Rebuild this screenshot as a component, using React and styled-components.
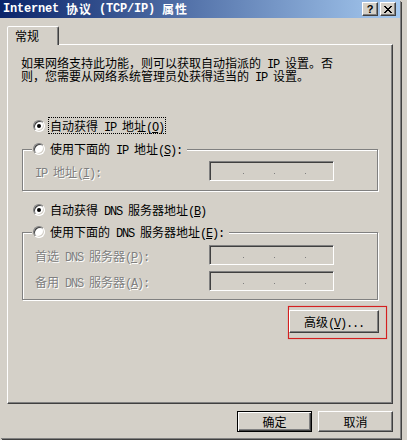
import React from "react";
import styled, { createGlobalStyle } from "styled-components";

const GlobalStyle = createGlobalStyle`
  html, body {
    margin: 0;
    padding: 0;
  }
  body {
    width: 407px;
    height: 440px;
    overflow: hidden;
    background: #d4d0c8;
    font-family: "Noto Sans CJK SC", "Noto Sans", sans-serif;
    font-size: 12px;
    color: #000;
  }
`;

const Window = styled.div`
  width: 400px;
  height: 438px;
  display: flex;
  flex-direction: column;
  background: #d4d0c8;
  box-shadow: 1px 1px 0 #808080, 2px 2px 0 #404040;
`;

const TitleBar = styled.div`
  flex: none;
  height: 18px;
  box-sizing: border-box;
  display: flex;
  align-items: center;
  padding: 0 4px 0 3px;
  background: linear-gradient(to right, #0a246a, #a6caf0);
  color: #fff;
  font-weight: bold;
  line-height: 18px;
  white-space: nowrap;
`;

const CaptionButtons = styled.div`
  margin-left: auto;
  display: flex;
  gap: 2px;
`;

const CaptionButton = styled.button`
  width: 16px;
  height: 14px;
  box-sizing: border-box;
  padding: 0;
  display: flex;
  align-items: center;
  justify-content: center;
  background: #d4d0c8;
  border: 1px solid;
  border-color: #fff #404040 #404040 #fff;
  box-shadow: inset -1px -1px 0 #808080;
  font-family: "Liberation Sans", Arial, sans-serif;
  font-weight: bold;
  font-size: 11px;
  line-height: 11px;
  color: #000;
`;

const Body = styled.div`
  flex: 1;
  display: flex;
  flex-direction: column;
  padding: 8px 0 0 7px;
`;

const Tab = styled.div`
  position: relative;
  z-index: 1;
  align-self: flex-start;
  width: 52px;
  height: 19px;
  box-sizing: border-box;
  margin-bottom: -1px;
  padding: 1px 0 0 7px;
  line-height: 15px;
  background: #d4d0c8;
  border: 1px solid;
  border-bottom: none;
  border-color: #fff #404040 transparent #fff;
  border-radius: 2px 2px 0 0;
  box-shadow: inset -1px 0 0 #808080;
`;

const Panel = styled.div`
  width: 386px;
  height: 360px;
  box-sizing: border-box;
  display: flex;
  flex-direction: column;
  border: 1px solid;
  border-color: #fff #404040 #404040 #fff;
  box-shadow: inset -1px -1px 0 #808080;
`;

const Intro = styled.p`
  margin: 11px 0 0 13px;
  line-height: 13px;
  white-space: nowrap;
`;

const RadioRow = styled.div`
  display: flex;
  align-items: center;
  height: 17px;
  margin: ${(p) => p.$mt}px 0 0 25px;
`;

const Radio = styled.span`
  flex: none;
  width: 12px;
  height: 12px;
  box-sizing: border-box;
  display: flex;
  align-items: center;
  justify-content: center;
  border-radius: 50%;
  border: 1px solid;
  border-color: #808080 #fff #fff #808080;
  box-shadow: inset 1px 1px 0 #404040, inset -1px -1px 0 #d4d0c8;
  background: #fff;

  &::after {
    content: "";
    display: ${(p) => (p.$checked ? "block" : "none")};
    width: 4px;
    height: 4px;
    border-radius: 50%;
    background: #000;
  }
`;

const Label = styled.span`
  margin-left: 3px;
  padding: 0 1px;
  height: 17px;
  box-sizing: border-box;
  line-height: 15px;
  white-space: nowrap;
  border: 1px dotted ${(p) => (p.$focus ? "#000" : "transparent")};
`;

const Group = styled.div`
  width: 356px;
  box-sizing: border-box;
  display: flex;
  flex-direction: column;
  margin: ${(p) => p.$mt}px 0 0 14px;
  padding-bottom: ${(p) => p.$pb}px;
  border: 1px solid #808080;
  box-shadow: 1px 1px 0 #fff, inset 1px 1px 0 #fff;
`;

const GroupHead = styled.div`
  align-self: flex-start;
  display: flex;
  align-items: center;
  height: 17px;
  margin: -10px 0 0 9px;
  padding: 0 3px 0 1px;
  background: #d4d0c8;
`;

const FieldRow = styled.div`
  display: grid;
  grid-template-columns: 174px 125px;
  align-items: center;
  margin-top: ${(p) => p.$mt}px;
  padding-left: 12px;
`;

const DimText = styled.span`
  color: #808080;
  text-shadow: 1px 1px 0 #fff;
  white-space: nowrap;
  line-height: 15px;
`;

const IpBox = styled.div`
  width: 125px;
  height: 20px;
  box-sizing: border-box;
  display: flex;
  align-items: flex-start;
  gap: 30px;
  padding: 11px 0 0 33px;
  background: #d4d0c8;
  border: 1px solid;
  border-color: #808080 #fff #fff #808080;
  box-shadow: inset 1px 1px 0 #404040, inset -1px -1px 0 #d4d0c8;
`;

const IpDot = styled.span`
  width: 1px;
  height: 1px;
  background: #808080;
`;

const Highlight = styled.div`
  align-self: flex-end;
  display: flex;
  margin: 6px 5px 0 0;
  padding: 3px 7px 5px 0;
  border: 1px solid #d41f1f;
  box-shadow: 0 0 1px rgba(220, 30, 30, 0.5), inset 0 0 1px rgba(220, 30, 30, 0.5);
`;

const Button = styled.button`
  width: ${(p) => p.$w}px;
  height: ${(p) => p.$h}px;
  box-sizing: border-box;
  padding: 0;
  background: #d4d0c8;
  font-family: "Noto Sans CJK SC", sans-serif;
  font-size: 12px;
  line-height: 15px;
  color: #000;
  white-space: nowrap;
  border: 1px solid;
  border-color: ${(p) => (p.$default ? "#000" : "#fff #404040 #404040 #fff")};
  box-shadow: ${(p) =>
    p.$default
      ? "inset 1px 1px 0 #fff, inset -1px -1px 0 #404040, inset -2px -2px 0 #808080"
      : "inset -1px -1px 0 #808080"};
`;

const Footer = styled.div`
  align-self: flex-end;
  display: flex;
  gap: 6px;
  margin: 7px 7px 0 0;
`;

// latin runs get a fixed 6px cell (7px bold), like the dialog's bitmap font
const Lat = styled.span`
  font-family: "Liberation Mono", "Courier New", monospace;
  font-size: 12px;
  line-height: 0;
  letter-spacing: ${(p) => (p.$bold ? "-0.2px" : "-1.2px")};
  white-space: pre;
`;

const Han = styled.span`
  letter-spacing: ${(p) => (p.$bold ? "1px" : "0")};
`;

// "&X" marks the access key, like a Win32 resource string
const accel = (s) =>
  s.split(/&(.)/).map((piece, i) => (i % 2 ? <u key={i}>{piece}</u> : piece));

const Mixed = ({ text, bold }) =>
  text
    .split(/([\x20-\x7e]+)/)
    .filter(Boolean)
    .map((part, i) =>
      /^[\x20-\x7e]+$/.test(part) ? (
        <Lat key={i} $bold={bold}>
          {accel(part)}
        </Lat>
      ) : (
        <Han key={i} $bold={bold}>
          {part}
        </Han>
      )
    );

const CloseGlyph = () => (
  <svg width="8" height="7" viewBox="0 0 8 7" shapeRendering="crispEdges">
    <path
      fill="#000"
      d="M0 0h2v1H0zM6 0h2v1H6zM1 1h2v1H1zM5 1h2v1H5zM2 2h4v1H2zM3 3h2v1H3zM2 4h4v1H2zM1 5h2v1H1zM5 5h2v1H5zM0 6h2v1H0zM6 6h2v1H6z"
    />
  </svg>
);

const IpField = () => (
  <IpBox>
    <IpDot />
    <IpDot />
    <IpDot />
  </IpBox>
);

export default function App() {
  return (
    <>
      <GlobalStyle />
      <Window>
        <TitleBar>
          <Mixed text="Internet 协议 (TCP/IP) 属性" bold />
          <CaptionButtons>
            <CaptionButton>?</CaptionButton>
            <CaptionButton>
              <CloseGlyph />
            </CaptionButton>
          </CaptionButtons>
        </TitleBar>

        <Body>
          <Tab>常规</Tab>
          <Panel>
            <Intro>
              <Mixed text="如果网络支持此功能，则可以获取自动指派的 IP 设置。否" />
              <br />
              <Mixed text="则，您需要从网络系统管理员处获得适当的 IP 设置。" />
            </Intro>

            <RadioRow $mt={35}>
              <Radio $checked />
              <Label $focus>
                <Mixed text="自动获得 IP 地址(&O)" />
              </Label>
            </RadioRow>

            <Group $mt={15} $pb={9}>
              <GroupHead>
                <Radio />
                <Label>
                  <Mixed text="使用下面的 IP 地址(&S):" />
                </Label>
              </GroupHead>
              <FieldRow $mt={4}>
                <DimText>
                  <Mixed text="IP 地址(&I):" />
                </DimText>
                <IpField />
              </FieldRow>
            </Group>

            <RadioRow $mt={10}>
              <Radio $checked />
              <Label>
                <Mixed text="自动获得 DNS 服务器地址(&B)" />
              </Label>
            </RadioRow>

            <Group $mt={14} $pb={8}>
              <GroupHead>
                <Radio />
                <Label>
                  <Mixed text="使用下面的 DNS 服务器地址(&E):" />
                </Label>
              </GroupHead>
              <FieldRow $mt={5}>
                <DimText>
                  <Mixed text="首选 DNS 服务器(&P):" />
                </DimText>
                <IpField />
              </FieldRow>
              <FieldRow $mt={6}>
                <DimText>
                  <Mixed text="备用 DNS 服务器(&A):" />
                </DimText>
                <IpField />
              </FieldRow>
            </Group>

            <Highlight>
              <Button $w={90} $h={23}>
                <Mixed text="高级(&V)..." />
              </Button>
            </Highlight>
          </Panel>

          <Footer>
            <Button $w={75} $h={21} $default>
              确定
            </Button>
            <Button $w={75} $h={21}>
              取消
            </Button>
          </Footer>
        </Body>
      </Window>
    </>
  );
}
